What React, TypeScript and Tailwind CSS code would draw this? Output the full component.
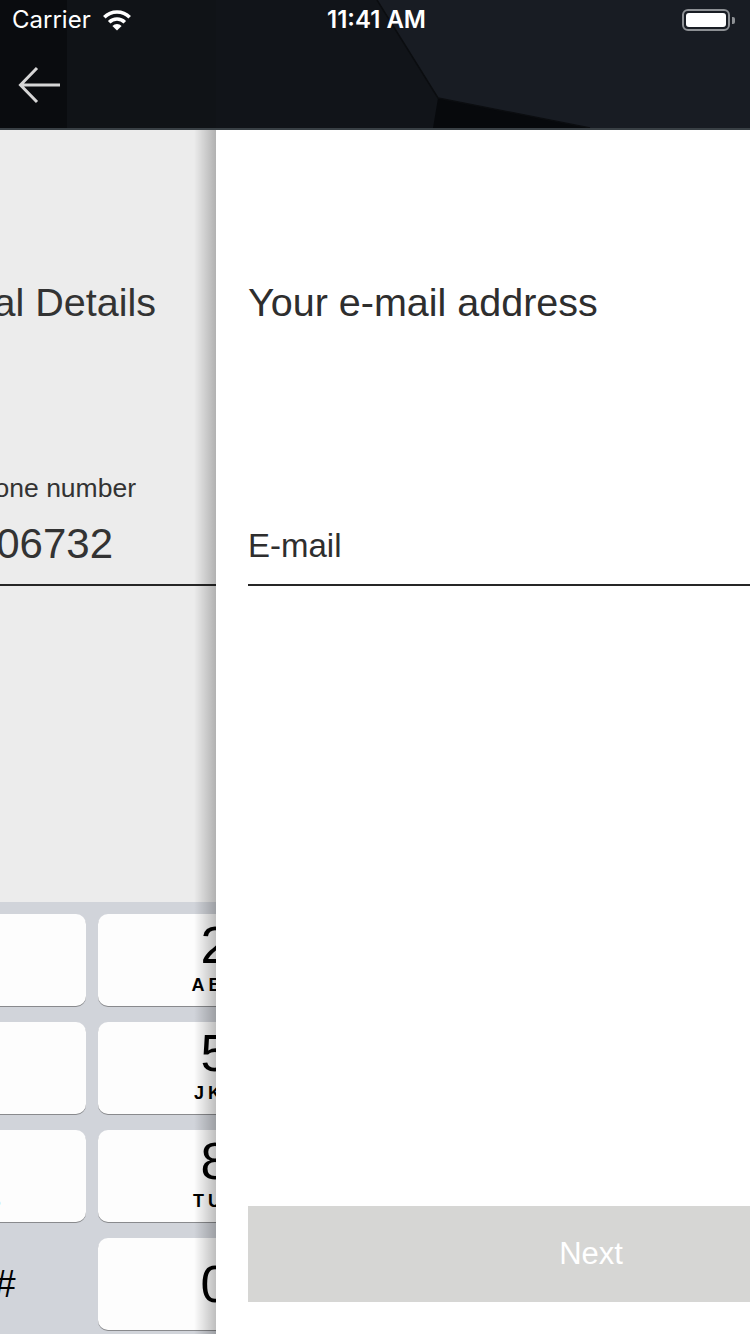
import React from "react";

const KEYS: { digit: string; letters?: string; blank?: boolean }[] = [
  { digit: "1", letters: "" },
  { digit: "2", letters: "ABC" },
  { digit: "3", letters: "DEF" },
  { digit: "4", letters: "GHI" },
  { digit: "5", letters: "JKL" },
  { digit: "6", letters: "MNO" },
  { digit: "7", letters: "PQRS" },
  { digit: "8", letters: "TUV" },
  { digit: "9", letters: "WXYZ" },
  { digit: "+ * #", blank: true },
  { digit: "0" },
  { digit: "⌫", blank: true },
];

function Wifi() {
  return (
    <svg width="28" height="22" viewBox="0 0 28 22" fill="none">
      <path d="M1.3 8.3 A18 18 0 0 1 26.7 8.3" stroke="white" strokeWidth="3.6" />
      <path d="M6.2 13.2 A11 11 0 0 1 21.8 13.2" stroke="white" strokeWidth="3.6" />
      <path d="M14 21.5 L9.4 16.9 A6.5 6.5 0 0 1 18.6 16.9 Z" fill="white" />
    </svg>
  );
}

function Battery() {
  return (
    <div className="flex items-center gap-[2px]">
      <div className="w-[48px] h-[22px] rounded-[6px] border-2 border-[#8d9094] p-[2px]">
        <div className="w-full h-full rounded-[3px] bg-white" />
      </div>
      <div className="w-[3px] h-[7px] rounded-r-[2px] bg-[#8d9094]" />
    </div>
  );
}

function StatusBar() {
  return (
    <div className="absolute inset-x-0 top-0 h-[40px] grid grid-cols-3 items-center px-[12px] text-white font-['Inter','Liberation_Sans',sans-serif] text-[24px]">
      <div className="flex items-center gap-[12px]">
        <span className="leading-none">Carrier</span>
        <Wifi />
      </div>
      <div className="text-center font-semibold leading-none pl-[3px]">11:41 AM</div>
      <div className="flex justify-end pr-[3px]">
        <Battery />
      </div>
    </div>
  );
}

function Header() {
  return (
    <div className="relative h-[130px] shrink-0 flex border-b-2 border-[#394045]">
      <div className="w-[216px] shrink-0 flex">
        <div className="w-[67px] bg-[#0a0c0f] pt-[66px] pl-[18px]">
          <svg width="44" height="40" viewBox="0 0 44 40" fill="none">
            <path d="M42 19 H3 M19 2 L2.5 19 L19 36" stroke="#d6d6d6" strokeWidth="3" />
          </svg>
        </div>
        <div className="flex-1 bg-[#101317]" />
      </div>
      <div className="flex-1 bg-[#111419]">
        <svg className="block w-full h-full" viewBox="0 0 534 128" preserveAspectRatio="none">
          <polygon points="161,0 534,0 534,128 374,128 222,98" fill="#181c23" />
          <polygon points="222,98 374,128 217,128" fill="#07090c" />
          <polyline points="161,0 222,98 374,128" fill="none" stroke="#0b0d10" strokeWidth="1.5" />
        </svg>
      </div>
      <StatusBar />
    </div>
  );
}

function Keypad() {
  return (
    <div className="h-[432px] shrink-0 bg-[#d1d4da]">
      <div className="w-[750px] ml-[-160px] grid grid-cols-3 gap-x-[12px] gap-y-[16px] px-[12px] pt-[12px] font-['Liberation_Sans',Arial,sans-serif] text-black">
        {KEYS.map((k) =>
          k.blank ? (
            <div key={k.digit} className="h-[92px] flex items-center justify-center pl-[14px] text-[38px]">
              {k.digit}
            </div>
          ) : (
            <div
              key={k.digit}
              className={`h-[92px] rounded-[10px] bg-[#fdfdfd] shadow-[0_1px_0_#898a8d] flex flex-col items-center ${
                k.letters === undefined ? "justify-center" : "pt-[5px]"
              }`}
            >
              <span className="text-[52px] leading-[52px]">{k.digit}</span>
              {k.letters ? (
                <span className="mt-[5px] text-[18px] leading-none font-bold tracking-[0.22em] pl-[0.22em]">
                  {k.letters}
                </span>
              ) : null}
            </div>
          )
        )}
      </div>
    </div>
  );
}

export default function App() {
  return (
    <div className="w-[750px] h-[1334px] overflow-hidden flex flex-col bg-white font-['Liberation_Sans',Arial,sans-serif]">
      <Header />
      <div className="flex flex-1 min-h-0">
        {/* previous screen, sliding out */}
        <div className="w-[216px] shrink-0 overflow-hidden flex flex-col bg-[#ececec] text-[#333]">
          <div className="flex-1 flex flex-col pt-[153px]">
            <div className="w-[156px] flex justify-end whitespace-nowrap text-[39.5px] leading-none">
              Personal Details
            </div>
            <div className="w-[136px] mt-[152px] flex justify-end whitespace-nowrap text-[26.5px] leading-none">
              Mobile phone number
            </div>
            <div className="w-[113px] mt-[22px] flex justify-end whitespace-nowrap text-[42px] leading-none">
              +49 171 4406732
            </div>
            <div className="mt-[19px] h-[2px] bg-[#262626]" />
          </div>
          <Keypad />
        </div>

        {/* new screen, sliding in */}
        <div className="relative z-10 w-[750px] shrink-0 bg-white px-[32px] pt-[153px] flex flex-col text-[#2e2e2e]">
          <div className="absolute top-0 bottom-0 left-[-22px] w-[22px] bg-gradient-to-r from-transparent to-black/25" />
          <div className="text-[39.5px] leading-none whitespace-nowrap">Your e-mail address</div>
          <div className="mt-[206px] text-[33px] leading-none">E-mail</div>
          <div className="mt-[22px] h-[2px] bg-[#262626]" />
          <div className="flex-1" />
          <button className="mb-[32px] h-[96px] w-full bg-[#d6d6d4] text-white text-[31px] flex items-center justify-center">
            Next
          </button>
        </div>
      </div>
    </div>
  );
}
